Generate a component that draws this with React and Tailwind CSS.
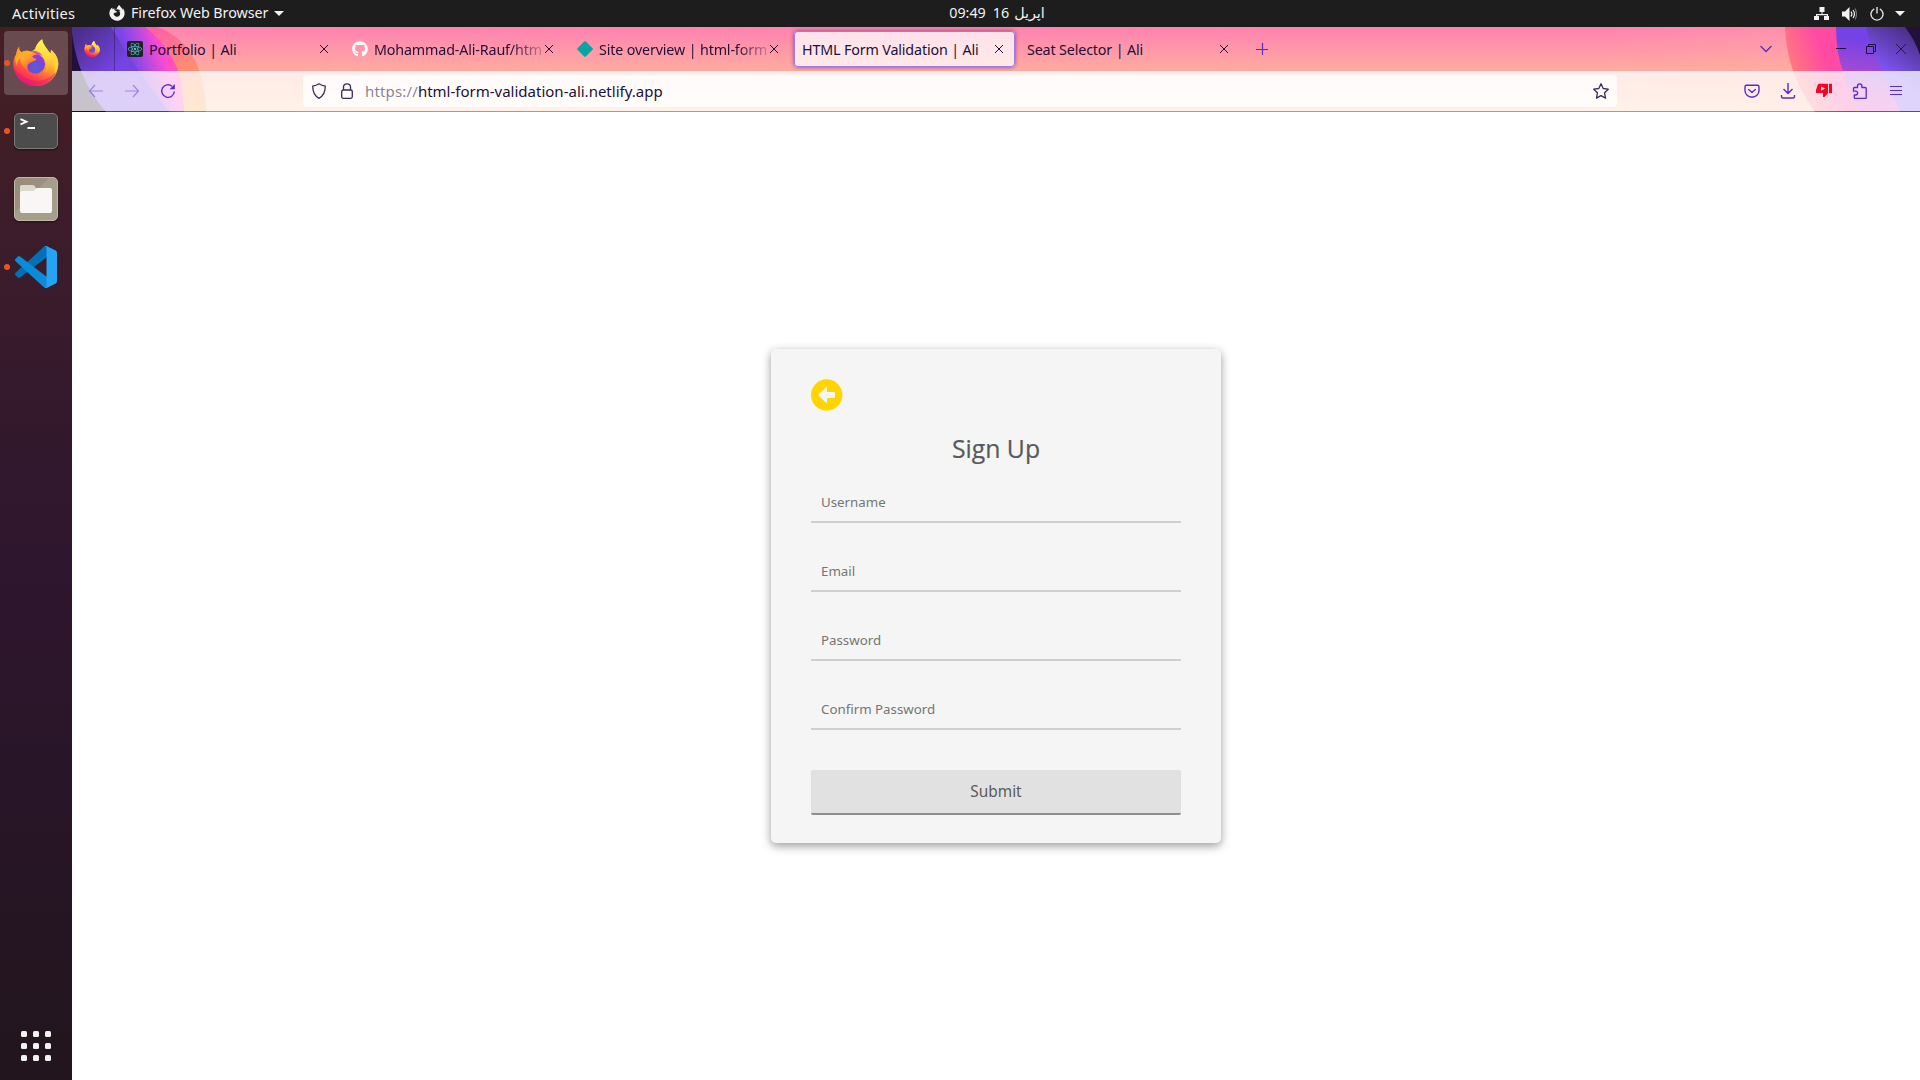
import React from "react";
import { FaFirefoxBrowser, FaGithub, FaReact } from "react-icons/fa";

function FirefoxLogo({ className, id }) {
  return (
    <svg viewBox="40 56 139 141" className={className} preserveAspectRatio="none">
      <defs>
        <linearGradient id={id + "body"} x1="0.8" y1="0.1" x2="0.3" y2="1">
          <stop offset="0.05" stopColor="#fff04a" />
          <stop offset="0.35" stopColor="#ffbd30" />
          <stop offset="0.6" stopColor="#ff7139" />
          <stop offset="0.82" stopColor="#ff3650" />
          <stop offset="1" stopColor="#e31480" />
        </linearGradient>
        <radialGradient id={id + "globe"} cx="0.5" cy="0.7" r="0.7">
          <stop offset="0" stopColor="#5a5fd8" />
          <stop offset="0.5" stopColor="#6e4bd6" />
          <stop offset="1" stopColor="#a932d6" />
        </radialGradient>
        <linearGradient id={id + "head"} x1="0" y1="0" x2="0.7" y2="1">
          <stop offset="0" stopColor="#ff9a1e" />
          <stop offset="0.5" stopColor="#ffad28" />
          <stop offset="1" stopColor="#ff5b3c" />
        </linearGradient>
        <linearGradient id={id + "flame"} x1="0.5" y1="0" x2="0.6" y2="1">
          <stop offset="0" stopColor="#fff44f" />
          <stop offset="0.55" stopColor="#ffd83c" />
          <stop offset="1" stopColor="#ff9a30" />
        </linearGradient>
      </defs>
      <path
        d="M59 79C57 87 60 92 66 96C74 91 86 90 93 94C101 92 104 88 108 84C112 72 119 64 128 57C130 74 143 84 153 99L155 88C168 99 177 113 177 130A68 67 0 0 1 41 132C41 116 46 107 50 102C51 92 54 85 59 79Z"
        fill={`url(#${id}body)`}
      />
      <path d="M42 140A67 66 0 0 0 172 150C150 190 76 196 42 140Z" fill="#e3157c" opacity="0.45" />
      <path
        d="M107 84C112 72 119 64 128 57C130 74 143 84 149 98C161 120 154 147 134 160C145 143 142 123 133 112C124 102 112 99 107 84Z"
        fill={`url(#${id}flame)`}
      />
      <path d="M155 88C168 99 177 113 177 130C176 143 172 153 166 162C168 139 164 112 155 103Z" fill="#ffd23c" opacity="0.8" />
      <circle cx="108" cy="131" r="29" fill={`url(#${id}globe)`} />
      <path
        d="M59 79C57 87 60 92 66 96C74 91 86 90 93 94C100 94 106 96 111 103C103 104 100 106 98 109C104 114 108 113 111 116C108 123 99 124 91 127C81 132 82 143 87 150C73 143 60 130 62 113C55 119 52 127 51 136C46 120 45 109 50 102C51 92 54 85 59 79Z"
        fill={`url(#${id}head)`}
      />
      <path d="M93 94C106 88 122 94 130 107C121 103 114 104 111 103C106 97 100 95 93 94Z" fill="#c02fd0" opacity="0.75" />
    </svg>
  );
}

function ThemeArt() {
  return (
    <svg className="absolute inset-0 h-full w-full" viewBox="0 0 1848 85" preserveAspectRatio="none">
      <defs>
        <linearGradient id="sky" x1="0" y1="0" x2="0" y2="1">
          <stop offset="0" stopColor="#ff82b2" />
          <stop offset="0.52" stopColor="#ffac9f" />
          <stop offset="1" stopColor="#ffc8a4" />
        </linearGradient>
        <linearGradient id="coral" gradientUnits="userSpaceOnUse" x1="85" y1="0" x2="110" y2="85">
          <stop offset="0" stopColor="#ff5fa8" />
          <stop offset="0.5" stopColor="#ff8a74" />
          <stop offset="1" stopColor="#ffa04e" />
        </linearGradient>
        <linearGradient id="magenta" gradientUnits="userSpaceOnUse" x1="58" y1="34" x2="100" y2="20">
          <stop offset="0" stopColor="#7a45e8" />
          <stop offset="0.35" stopColor="#b14ae0" />
          <stop offset="0.75" stopColor="#ff4bd0" />
          <stop offset="1" stopColor="#ff55a5" />
        </linearGradient>
        <linearGradient id="indigo" gradientUnits="userSpaceOnUse" x1="12" y1="0" x2="48" y2="36">
          <stop offset="0" stopColor="#4b2f8c" />
          <stop offset="1" stopColor="#7443e2" />
        </linearGradient>
        <linearGradient id="rose" gradientUnits="userSpaceOnUse" x1="1712" y1="44" x2="1752" y2="28">
          <stop offset="0" stopColor="#ff8276" />
          <stop offset="1" stopColor="#ff4aa4" />
        </linearGradient>
        <linearGradient id="violet" gradientUnits="userSpaceOnUse" x1="1785" y1="12" x2="1775" y2="75">
          <stop offset="0" stopColor="#7442e6" />
          <stop offset="0.55" stopColor="#a84bd2" />
          <stop offset="1" stopColor="#e04ac0" />
        </linearGradient>
        <linearGradient id="plum" gradientUnits="userSpaceOnUse" x1="1836" y1="0" x2="1808" y2="40">
          <stop offset="0" stopColor="#462d80" />
          <stop offset="1" stopColor="#7f54f4" />
        </linearGradient>
        <linearGradient id="haze" x1="0" y1="0" x2="1" y2="0">
          <stop offset="0" stopColor="#ffb0a6" stopOpacity="0" />
          <stop offset="1" stopColor="#ffb0a6" stopOpacity="0.3" />
        </linearGradient>
      </defs>
      <rect width="1848" height="85" fill="url(#sky)" />
      <path d="M1540 0H1713L1721 44L1743 85H1540Z" fill="url(#haze)" />
      <path d="M73 0H85C110 8 124 30 130 52Q134 68 134 85H90Z" fill="url(#coral)" />
      <path d="M38 0H73C92 14 103 34 107 46Q111 64 112 85H38Z" fill="url(#magenta)" />
      <path d="M0 0H39Q66 46 97 85H0Z" fill="url(#indigo)" />
      <path d="M0 6C4 36 13 60 34 85H0Z" fill="#21103a" />
      <path d="M1713 0Q1714 23 1721 44Q1729 66 1743 85H1848V0Z" fill="url(#rose)" />
      <path d="M1764 0Q1764 26 1771 44Q1777 66 1788 85H1848V0Z" fill="url(#violet)" />
      <path d="M1794 0Q1799 22 1810 44L1828 85H1848V0Z" fill="url(#plum)" />
      <path d="M1833 0Q1843 13 1848 28V0Z" fill="#21103a" />
    </svg>
  );
}

function CloseGlyph({ className }) {
  return (
    <svg viewBox="0 0 16 16" className={className} fill="none" stroke="currentColor" strokeWidth="1">
      <path d="M4 4l8 8M12 4l-8 8" />
    </svg>
  );
}

function Tab({ icon, title, active, faded }) {
  return (
    <div className="h-full w-[225px] shrink-0 pt-1 pl-1">
      <div
        className={
          "flex h-[36px] w-full items-center rounded-[4px] pr-2 pl-2 " +
          (active ? "bg-white/75 shadow-[inset_0_0_0_1px_#a675f5,0_0_4px_rgba(60,20,60,0.6)]" : "")
        }
      >
        {icon && <div className="mr-[6px] h-4 w-4 shrink-0">{icon}</div>}
        <div
          className={
            "min-w-0 flex-1 overflow-hidden pt-[2px] text-[14.3px] leading-[22px] tracking-[-0.15px] whitespace-nowrap " +
            (faded ? "[mask-image:linear-gradient(to_left,rgba(0,0,0,0.25),black_30px)]" : "")
          }
        >
          {title}
        </div>
        <CloseGlyph className="h-4 w-4 shrink-0" />
      </div>
    </div>
  );
}

function DockItem({ running, selected, children }) {
  return (
    <div className={"relative ml-1 flex h-16 w-16 items-center justify-center rounded-[4px] " + (selected ? "bg-white/20" : "")}>
      {running && <span className="absolute top-[29px] left-0 h-[6px] w-[6px] rounded-full bg-[#e95420]" />}
      {children}
    </div>
  );
}

function Dock() {
  return (
    <aside className="flex h-full w-[72px] shrink-0 flex-col bg-[linear-gradient(to_bottom,#451f24_0%,#3b1c2b_22%,#2e162e_50%,#281527_75%,#22151d_100%)] pt-1">
      <div className="flex flex-col gap-1">
        <DockItem running selected>
          <FirefoxLogo id="dock" className="mb-[2px] h-[47px] w-[46px]" />
        </DockItem>
        <DockItem running>
          <div className="h-[36px] w-[44px] rounded-[5px] border border-[#7a7c7a] bg-[#4b4c4b] shadow-[0_1px_2px_rgba(0,0,0,0.5)]">
            <svg viewBox="0 0 42 34" className="h-[34px] w-[42px]" fill="none" stroke="#fff" strokeWidth="1.8">
              <path d="M5.500 5.200l6 2.600l-6 2.600M12.500 14h7.500" />
            </svg>
          </div>
        </DockItem>
        <DockItem>
          <div className="flex h-[44px] w-[44px] items-center justify-center rounded-[5px] border border-[#c0bba6] bg-[linear-gradient(135deg,#958d79_0%,#9a927d_40%,#a59e8a_41%,#a59e8a_100%)] shadow-[0_1px_2px_rgba(0,0,0,0.5)]">
            <svg viewBox="0 0 32 28" className="h-[28px] w-[32px]">
              <path d="M0 12V2a2 2 0 0 1 2-2h10.500q1.500 0 2.300 1.200L17 5v7z" fill="#dcd8cc" />
              <path d="M0 8q0-2 2-2h10.500q1.500 0 2.300-1.200l.6-.8Q16 3 17.500 3H30q2 0 2 2v21a2 2 0 0 1-2 2H2a2 2 0 0 1-2-2z" fill="#f8f7f6" />
            </svg>
          </div>
        </DockItem>
        <DockItem running>
          <svg viewBox="0 0 100 100" className="h-[42px] w-[42px]">
            <path fill="#0070b8" d="M96.461 10.796L75.857.876C73.472-.273 70.622.212 68.75 2.083L1.299 63.583c-1.815 1.654-1.813 4.511.004 6.162l5.51 5.009c1.485 1.35 3.722 1.45 5.321.237L93.361 13.37C96.086 11.303 100 13.246 100 16.667v-.24c0-2.4-1.375-4.589-3.539-5.631z" />
            <path fill="#0b8cdb" d="M96.461 89.204L75.857 99.125c-2.385 1.148-5.235.663-7.107-1.208L1.299 36.417c-1.815-1.654-1.813-4.511.004-6.162l5.51-5.009c1.485-1.35 3.722-1.45 5.321-.237L93.361 86.63c2.725 2.067 6.639.124 6.639-3.297v.24c0 2.4-1.375 4.589-3.539 5.631z" />
            <path fill="#26a4f4" d="M75.858 99.126c-2.386 1.148-5.236.662-7.108-1.209C71.056 100.223 75 98.59 75 95.328V4.672C75 1.41 71.056-.223 68.75 2.083 70.622.211 73.472-.274 75.858.874l20.601 9.907C98.623 11.822 100 14.011 100 16.413v67.174c0 2.402-1.377 4.592-3.541 5.633z" />
          </svg>
        </DockItem>
      </div>
      <div className="mt-auto mb-[19px] ml-[21px] grid w-[30px] grid-cols-3 gap-[6px]">
        {Array.from({ length: 9 }, (_, i) => (
          <span key={i} className="h-[6px] w-[6px] rounded-[1.5px] bg-[#f2f1ef]" />
        ))}
      </div>
    </aside>
  );
}

function TopBar() {
  return (
    <header className="grid h-[27px] w-full shrink-0 grid-cols-[1fr_auto_1fr] bg-[#1d1d1d] text-[#f2f2f2]">
      <div className="flex items-center pl-3">
        <span className="w-[97px] pb-[2px] text-[14.6px] leading-[24px] tracking-[0.25px]">Activities</span>
        <FaFirefoxBrowser className="mb-px h-4 w-4" />
        <span className="ml-[6px] pb-px text-[14.3px] leading-[24px] tracking-[-0.05px]">Firefox Web Browser</span>
        <svg viewBox="0 0 10 5" className="ml-[6px] h-[5px] w-[10px] fill-current">
          <path d="M0 0h10L5 5z" />
        </svg>
      </div>
      <div className="flex items-center pb-[2px] pl-[74px] text-[14.3px] leading-[24px]">
        <span>09:49</span>
        <span className="ml-[7px]">16</span>
        <span className="ml-[5px]">اپریل</span>
      </div>
      <div className="flex items-center justify-end pr-[15px]">
        <svg viewBox="0 0 16 14" className="mr-[12px] h-[14px] w-4 fill-current">
          <path d="M5.500 0h5v5h-2v2H14v2h1v4h-5V9h2.800V8.200H3.200V9H5v4H0V9h2V7h5.500V5h-2z" />
        </svg>
        <svg viewBox="0 0 16 14" className="mr-[12px] h-[14px] w-4">
          <path d="M0 4.500h3L7.500 0v14L3 9.500H0z" fill="#f2f2f2" />
          <path d="M9 4.500q1.800 2.500 0 5M11 3q3 4 0 8" fill="none" stroke="#f2f2f2" strokeWidth="1.2" />
          <path d="M13 1.500q3 5.500 0 11" fill="none" stroke="#777" strokeWidth="1.2" />
        </svg>
        <svg viewBox="0 0 14 14" className="mr-[11px] h-[14px] w-[14px]" fill="none" stroke="#e4e4e4" strokeWidth="1.4">
          <path d="M4.200 1.800a6 6 0 1 0 5.600 0M7 0v6.500" />
        </svg>
        <svg viewBox="0 0 10 5" className="h-[5px] w-[10px] fill-current">
          <path d="M0 0h10L5 5z" />
        </svg>
      </div>
    </header>
  );
}

function TabStrip() {
  return (
    <div className="relative flex h-[44px] text-[#21103a]">
      <div className="flex w-[43px] items-center border-r border-[#21103a]/40 pl-3">
        <FirefoxLogo id="pin" className="h-4 w-4" />
      </div>
      <Tab
        icon={
          <div className="flex h-4 w-4 items-center justify-center rounded-[2px] bg-[#222]">
            <FaReact className="h-[14px] w-[14px] text-[#53c1de]" />
          </div>
        }
        title="Portfolio | Ali"
      />
      <Tab icon={<FaGithub className="h-4 w-4 text-white" />} title="Mohammad-Ali-Rauf/htm" faded />
      <Tab
        icon={
          <svg viewBox="0 0 16 16" className="h-4 w-4">
            <path d="M7.200.6Q8 0 8.800.6l6.700 6.700q.7.700 0 1.400L8.800 15.400q-.8.600-1.600 0L.5 8.700q-.7-.7 0-1.400z" fill="#05a5a1" />
          </svg>
        }
        title="Site overview | html-form"
        faded
      />
      <Tab title="HTML Form Validation | Ali" active />
      <Tab title="Seat Selector | Ali" />
      <svg viewBox="0 0 12 12" className="mt-4 ml-4 h-3 w-3" stroke="#592acb" strokeWidth="1.2">
        <path d="M6.500 0v12M0 6.500h12" />
      </svg>
      <div className="ml-auto flex items-center pr-[14px]">
        <svg viewBox="0 0 12 8" className="mr-[64px] h-2 w-3" fill="none" stroke="#592acb" strokeWidth="1.3">
          <path d="M.5 1L6 6.500L11.500 1" />
        </svg>
        <svg viewBox="0 0 10 10" className="mr-[20px] h-[10px] w-[10px]" stroke="#21103a" strokeWidth="1">
          <path d="M0 4.500h10" />
        </svg>
        <svg viewBox="0 0 10 10" className="mr-[20px] h-[10px] w-[10px]" fill="none" stroke="#21103a" strokeWidth="1">
          <path d="M.5 2.500h7v7h-7zM2.500 2.500v-2h7v7h-2" />
        </svg>
        <svg viewBox="0 0 10 10" className="h-[10px] w-[10px]" stroke="#21103a" strokeWidth="0.9">
          <path d="M0 0l10 10M10 0L0 10" />
        </svg>
      </div>
    </div>
  );
}

function Toolbar() {
  return (
    <div className="relative flex h-[41px] items-center border-b border-black/25 bg-white/75 bg-clip-padding pr-4 pl-4 text-[#592acb]">
      <div className="flex w-[215px] items-center gap-5">
        <svg viewBox="0 0 16 16" className="h-4 w-4 opacity-45" fill="none" stroke="currentColor" strokeWidth="1.2">
          <path d="M15 8H1.500M7 2L1.500 8L7 14" />
        </svg>
        <svg viewBox="0 0 16 16" className="h-4 w-4 opacity-45" fill="none" stroke="currentColor" strokeWidth="1.2">
          <path d="M1 8h13.500M9 2l5.500 6L9 14" />
        </svg>
        <svg viewBox="0 0 16 16" className="h-4 w-4" fill="none" stroke="currentColor" strokeWidth="1.4">
          <path d="M14.300 8.500a6.300 6.300 0 1 1-2.300-5.300" />
          <path d="M14.800 1v5.200h-5.200z" fill="currentColor" stroke="none" />
        </svg>
      </div>
      <div className="flex h-8 w-[1314px] items-center rounded-[4px] bg-white/80 pr-2 pl-2 text-[#3b2a55]">
        <svg viewBox="0 0 16 16" className="h-4 w-4" fill="none" stroke="currentColor" strokeWidth="1.3">
          <path d="M8 .8c2 1.400 4 2 6.300 2.300 0 6.400-1.800 10-6.300 12.200C3.500 13.100 1.700 9.500 1.700 3.100 4 2.800 6 2.200 8 .8z" strokeLinejoin="round" />
        </svg>
        <svg viewBox="0 0 12 16" className="ml-[14px] h-4 w-3" fill="none" stroke="currentColor" strokeWidth="1.3">
          <rect x=".7" y="7" width="10.600" height="8.300" rx="1.500" />
          <path d="M2.500 7V4a3.500 3.200 0 0 1 7 0v3" />
        </svg>
        <div className="ml-3 flex-1 text-[15px] leading-[20px] whitespace-nowrap">
          <span className="tracking-[0.15px] text-[#21103a]/55">https://</span>
          <span className="text-[#21103a]">html-form-validation-ali.netlify.app</span>
        </div>
        <svg viewBox="0 0 16 16" className="h-4 w-4" fill="none" stroke="currentColor" strokeWidth="1.3" strokeLinejoin="round">
          <path d="M8 .8l2.200 4.700 5.100.7-3.700 3.600.9 5.300L8 12.600l-4.500 2.500.9-5.300L.7 6.200l5.100-.7z" />
        </svg>
      </div>
      <div className="ml-auto flex items-center gap-5">
        <svg viewBox="0 0 16 16" className="h-4 w-4" fill="none" stroke="currentColor" strokeWidth="1.4" strokeLinejoin="round" strokeLinecap="round">
          <path d="M2.500 2.200h11q1.500 0 1.500 1.500V7.500a7 6.700 0 0 1-14 0V3.700q0-1.500 1.500-1.500z" />
          <path d="M4.700 6.500L8 9.500l3.300-3" />
        </svg>
        <svg viewBox="0 0 16 16" className="h-4 w-4" fill="none" stroke="currentColor" strokeWidth="1.4">
          <path d="M8 0v10M3.500 6L8 10.500L12.500 6M1.500 12v1.500q0 1.500 1.500 1.500h10q1.500 0 1.500-1.500V12" />
        </svg>
        <svg viewBox="0 0 16 16" className="h-4 w-4">
          <path d="M3 .8h9v9.500L8.500 14H7V10H0V7L1.500 2.500Q2 1 3 .8zM13 .8h3v9.400h-3z" fill="#ff0022" />
          <path d="M5 3.500L9 5.600L5 7.800z" fill="#ffe6e6" />
        </svg>
        <svg viewBox="0 0 16 16" className="h-4 w-4" fill="none" stroke="currentColor" strokeWidth="1.3" strokeLinejoin="round">
          <path d="M5.500 4.500V3a2.200 2.200 0 0 1 4.400 0v1.500h3.300q1 0 1 1v9q0 1-1 1H3.300q-1 0-1-1V12h1.400a1.900 1.900 0 0 0 0-3.800H1.500V5.500q0-1 1-1z" />
        </svg>
        <svg viewBox="0 0 16 16" className="h-4 w-4" fill="none" stroke="currentColor" strokeWidth="1.2">
          <path d="M2 3.500h12M2 7.500h12M2 11.500h12" />
        </svg>
      </div>
    </div>
  );
}

const fields = ["Username", "Email", "Password", "Confirm Password"];

function SignUp() {
  return (
    <form className="flex h-[494px] w-[450px] flex-col rounded-[5px] bg-[#f5f5f5] px-10 pt-[30px] text-[#5a5a5a] shadow-[0_3px_10px_rgba(0,0,0,0.4)]">
      <svg viewBox="0 0 32 32" className="h-8 w-8">
        <circle cx="15.700" cy="16" r="15.700" fill="#ffd500" />
        <path d="M7 16L15 8.200Q16 7.500 16 8.500V13h7.200q.8 0 .8.800v4.400q0 .8-.8.800H16v4.500q0 1-1 .3z" fill="#f5f5f5" />
      </svg>
      <h1 className="mt-[20px] text-center font-['Open_Sans',sans-serif] text-[24.8px] leading-[34px] [-webkit-text-stroke:0.2px_#5a5a5a]">Sign Up</h1>
      <div className="mt-[14px] flex flex-col gap-[25px]">
        {fields.map((f) => (
          <div key={f} className="h-[44px] border-b-2 border-[#cfcfcf] pt-[14px] pl-[10px] text-[13.300px] leading-[18px] text-[#757575]">
            {f}
          </div>
        ))}
      </div>
      <button type="button" className="mt-[40px] h-[45px] rounded-[2px] border-b-2 border-[#8f8f8f] bg-[#e1e1e1] text-[15.400px] leading-[20px]">
        Submit
      </button>
    </form>
  );
}

export default function App() {
  return (
    <div className="flex h-[1080px] w-[1920px] flex-col overflow-hidden bg-white font-['Noto_Sans','DejaVu_Sans',sans-serif]">
      <TopBar />
      <div className="flex min-h-0 flex-1">
        <Dock />
        <div className="flex min-w-0 flex-1 flex-col">
          <div className="relative h-[85px] shrink-0">
            <ThemeArt />
            <TabStrip />
            <Toolbar />
          </div>
          <main className="flex flex-1 items-center justify-center bg-white">
            <SignUp />
          </main>
        </div>
      </div>
    </div>
  );
}
